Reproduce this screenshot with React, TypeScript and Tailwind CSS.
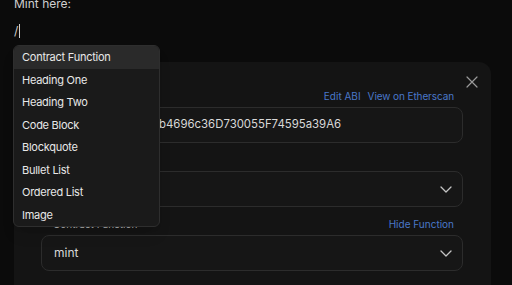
import React from "react";

function Chevron() {
  return (
    <svg width="12" height="7" viewBox="0 0 12 7" fill="none" stroke="#c4c4c4" strokeWidth="1.3" strokeLinecap="round" strokeLinejoin="round">
      <path d="M1 1l5 5 5-5" />
    </svg>
  );
}

const items = [
  "Contract Function",
  "Heading One",
  "Heading Two",
  "Code Block",
  "Blockquote",
  "Bullet List",
  "Ordered List",
  "Image",
];

export default function App() {
  return (
    <div
      className="relative w-[512px] h-[285px] overflow-hidden bg-[#0b0b0b] text-[#d6d6d6]"
      style={{ fontFamily: "Inter, 'Noto Sans', sans-serif" }}
    >
      <div className="px-[14px]">
        <p className="mt-[-5px] h-[18px] text-[12px] leading-[18px] text-[#cfcfcf]">Mint here:</p>
        <p className="mt-[9px] h-[18px] text-[12px] leading-[18px] text-[#cfcfcf] flex items-center">
          <span>/</span>
          <span className="ml-[1px] inline-block w-px h-[14px] bg-[#d0d0d0]" />
        </p>
      </div>

      <div className="relative ml-[14px] mt-[22px] w-[477px] h-[260px] rounded-[12px] bg-[#141414] pl-[27px] pr-[28px] pt-[27px]">
        <button className="absolute right-[13px] top-[14px] text-[#9a9a9a]">
          <svg width="12" height="12" viewBox="0 0 12 12" stroke="currentColor" strokeWidth="1.2" strokeLinecap="round">
            <path d="M1 1l10 10M11 1L1 11" />
          </svg>
        </button>

        <div className="flex h-[14px] items-center justify-between text-[10px] leading-[14px]">
          <span className="text-[#bdbdbd]">Contract Address</span>
          <div className="flex gap-[7px] text-[#4a78c9]">
            <span>Edit ABI</span>
            <span className="mr-[9px] tracking-[-0.1px]">View on Etherscan</span>
          </div>
        </div>
        <div className="mt-1 flex h-9 items-center rounded-[8px] border border-[#2c2c2c] bg-[#161616] px-3 text-[11.4px] text-[#d8d8d8]">
          0x7A2c9E1f3B8d0eb4696c36D730055F74595a39A6
        </div>

        <div className="mt-[10px] flex h-[14px] items-center text-[10px] leading-[14px] text-[#bdbdbd]">
          Contract
        </div>
        <div className="mt-1 flex h-9 items-center justify-between rounded-[8px] border border-[#2c2c2c] bg-[#161616] pl-3 pr-[10px] text-[12px]">
          <span className="text-[#d8d8d8]">Token</span>
          <Chevron />
        </div>

        <div className="mt-[10px] flex h-[14px] items-center justify-between px-3 text-[10px] leading-[14px]">
          <span className="text-[#bdbdbd]">Contract Function</span>
          <span className="mr-[-3px] text-[#4a78c9]">Hide Function</span>
        </div>
        <div className="mt-1 flex h-9 items-center justify-between rounded-[8px] border border-[#2c2c2c] bg-[#161616] pl-3 pr-[10px] text-[12px]">
          <span className="text-[#d8d8d8]">mint</span>
          <Chevron />
        </div>
      </div>

      <div className="absolute left-[13px] top-[45px] w-[147px] overflow-hidden rounded-[6px] border border-[#2e2e2e] bg-[#1a1a1a] shadow-lg">
        {items.map((it, i) => (
          <div
            key={it}
            className={
              i === 0
                ? "flex h-[22.5px] items-center bg-[#2a2a2a] px-2 text-[11px] tracking-[-0.25px] text-[#e8e8e8]"
                : "flex h-[22.5px] items-center px-2 text-[11px] tracking-[-0.25px] text-[#e8e8e8]"
            }
          >
            {it}
          </div>
        ))}
      </div>
    </div>
  );
}
